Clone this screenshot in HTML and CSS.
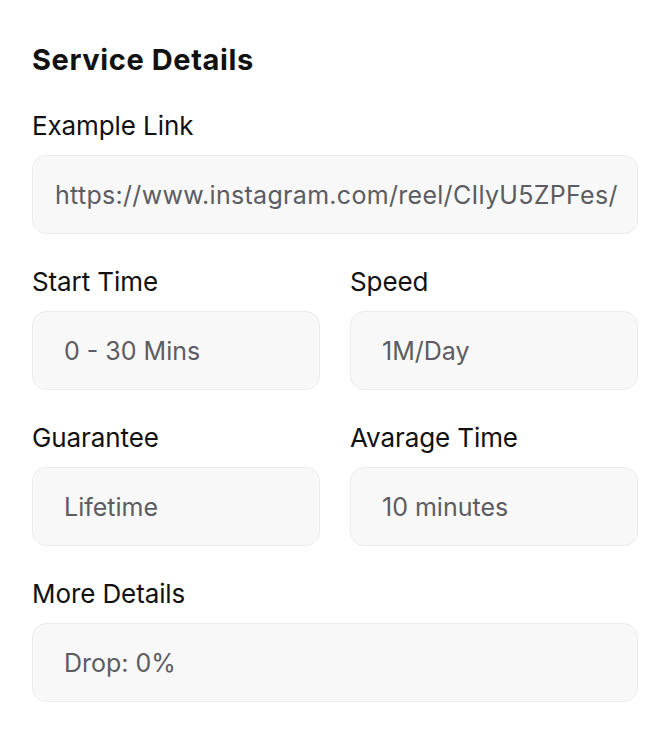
FILE: index.html
```html
<!DOCTYPE html>
<html>
<head>
<meta charset="utf-8">
<link rel="stylesheet" href="styles.css">
</head>
<body>
<div class="panel">
  <h2 class="title">Service Details</h2>
  <div class="field">
    <div class="label">Example Link</div>
    <div class="box box-link">https://www.instagram.com/reel/CIlyU5ZPFes/</div>
  </div>
  <div class="row">
    <div class="field">
      <div class="label">Start Time</div>
      <div class="box">0 - 30 Mins</div>
    </div>
    <div class="field">
      <div class="label">Speed</div>
      <div class="box">1M/Day</div>
    </div>
  </div>
  <div class="row">
    <div class="field">
      <div class="label">Guarantee</div>
      <div class="box">Lifetime</div>
    </div>
    <div class="field">
      <div class="label">Avarage Time</div>
      <div class="box">10 minutes</div>
    </div>
  </div>
  <div class="field">
    <div class="label">More Details</div>
    <div class="box">Drop: 0%</div>
  </div>
</div>
</body>
</html>
```

FILE: styles.css
```css
* { box-sizing: border-box; }
html, body { margin: 0; padding: 0; background: #fff; }
body { font-family: Inter, "Noto Sans", sans-serif; color: #111; }
.panel {
  padding: 39px 32px 0 32px;
  display: flex;
  flex-direction: column;
  gap: 33px;
}
.title {
  margin: 0 0 -3px 0;
  font-size: 29px;
  font-weight: 700;
  letter-spacing: 0.6px;
  line-height: 42px;
  color: #111;
}
.field { display: flex; flex-direction: column; gap: 14px; min-width: 0; }
.label {
  font-size: 26px;
  line-height: 30px;
  letter-spacing: -0.1px;
  color: #111;
  font-weight: 400;
}
.row { display: grid; grid-template-columns: 1fr 1fr; gap: 30px; }
.box {
  height: 79px;
  border: 1px solid #ececec;
  border-radius: 14px;
  background: #f8f8f8;
  display: flex;
  align-items: center;
  padding-left: 31px;
  font-size: 25px;
  letter-spacing: 0;
  color: #5c5c62;
  white-space: nowrap;
  overflow: hidden;
}
.box-link { padding-left: 22px; letter-spacing: 0.3px; }
```
